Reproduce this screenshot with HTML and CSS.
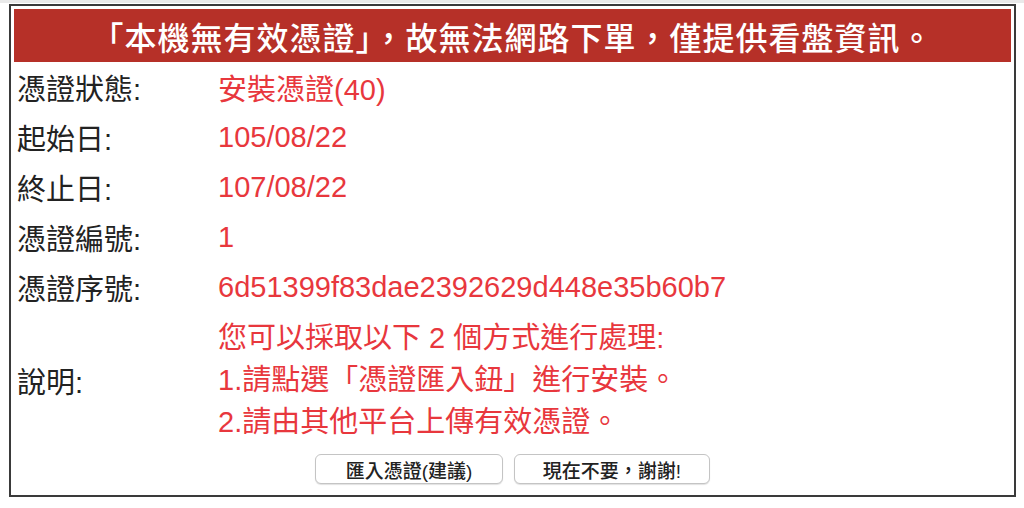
FILE: index.html
```html
<!DOCTYPE html>
<html lang="zh-Hant">
<head>
<meta charset="utf-8">
<title>憑證狀態</title>
<link rel="stylesheet" href="styles.css">
</head>
<body>
<div class="topband"></div>
<div class="panel">
  <div class="banner">「本機無有效憑證」，故無法網路下單，僅提供看盤資訊。</div>
  <div class="rows">
    <div class="label">憑證狀態:</div><div class="value">安裝憑證(40)</div>
    <div class="label">起始日:</div><div class="value">105/08/22</div>
    <div class="label">終止日:</div><div class="value">107/08/22</div>
    <div class="label">憑證編號:</div><div class="value">1</div>
    <div class="label">憑證序號:</div><div class="value">6d51399f83dae2392629d448e35b60b7</div>
  </div>
  <div class="desc">
    <div class="label">說明:</div>
    <div class="value lines">
      <div>您可以採取以下 2 個方式進行處理:</div>
      <div>1.請點選「憑證匯入鈕」進行安裝。</div>
      <div>2.請由其他平台上傳有效憑證。</div>
    </div>
  </div>
  <div class="actions">
    <button class="btn btn-import" type="button">匯入憑證(建議)</button>
    <button class="btn btn-skip" type="button">現在不要，謝謝!</button>
  </div>
</div>
</body>
</html>
```

FILE: styles.css
```css
html, body {
  margin: 0;
  padding: 0;
  background: #ffffff;
}

body {
  font-family: "Liberation Sans", "Noto Sans CJK TC", sans-serif;
  color: #222222;
}

.topband {
  height: 3px;
  background: #e9e9e9;
}

.panel {
  margin: 1px 0 0 9px;
  width: 1007px;
  height: 493px;
  box-sizing: border-box;
  border: 2px solid #3a3a3a;
  padding: 3px;
  display: flex;
  flex-direction: column;
}

.banner {
  height: 53px;
  flex: none;
  background: #b63028;
  color: #ffffff;
  font-size: 32px;
  font-weight: 500;
  letter-spacing: 1px;
  display: flex;
  align-items: center;
  justify-content: center;
  font-family: "Noto Sans CJK TC", sans-serif;
}

.rows {
  display: grid;
  grid-template-columns: 201px 1fr;
  grid-auto-rows: 50px;
  align-items: center;
  padding-left: 3px;
}

.label {
  font-size: 29px;
  color: #222222;
}

.value {
  font-size: 29px;
  color: #e8373d;
}

.desc {
  display: grid;
  grid-template-columns: 201px 1fr;
  align-items: center;
  padding: 5px 0 0 3px;
}

.lines {
  line-height: 42px;
}

.actions {
  display: flex;
  justify-content: center;
  gap: 11px;
  margin-top: 11px;
}

.btn {
  height: 30px;
  box-sizing: border-box;
  background: #ffffff;
  border: 1px solid #c4c4c4;
  border-radius: 6px;
  box-shadow: 0 1px 1px rgba(0, 0, 0, 0.12);
  font-family: "Liberation Sans", "Noto Sans CJK TC", sans-serif;
  font-size: 19px;
  font-weight: 500;
  color: #222222;
  padding: 0;
}

.btn-import {
  width: 188px;
}

.btn-skip {
  width: 196px;
}
```
